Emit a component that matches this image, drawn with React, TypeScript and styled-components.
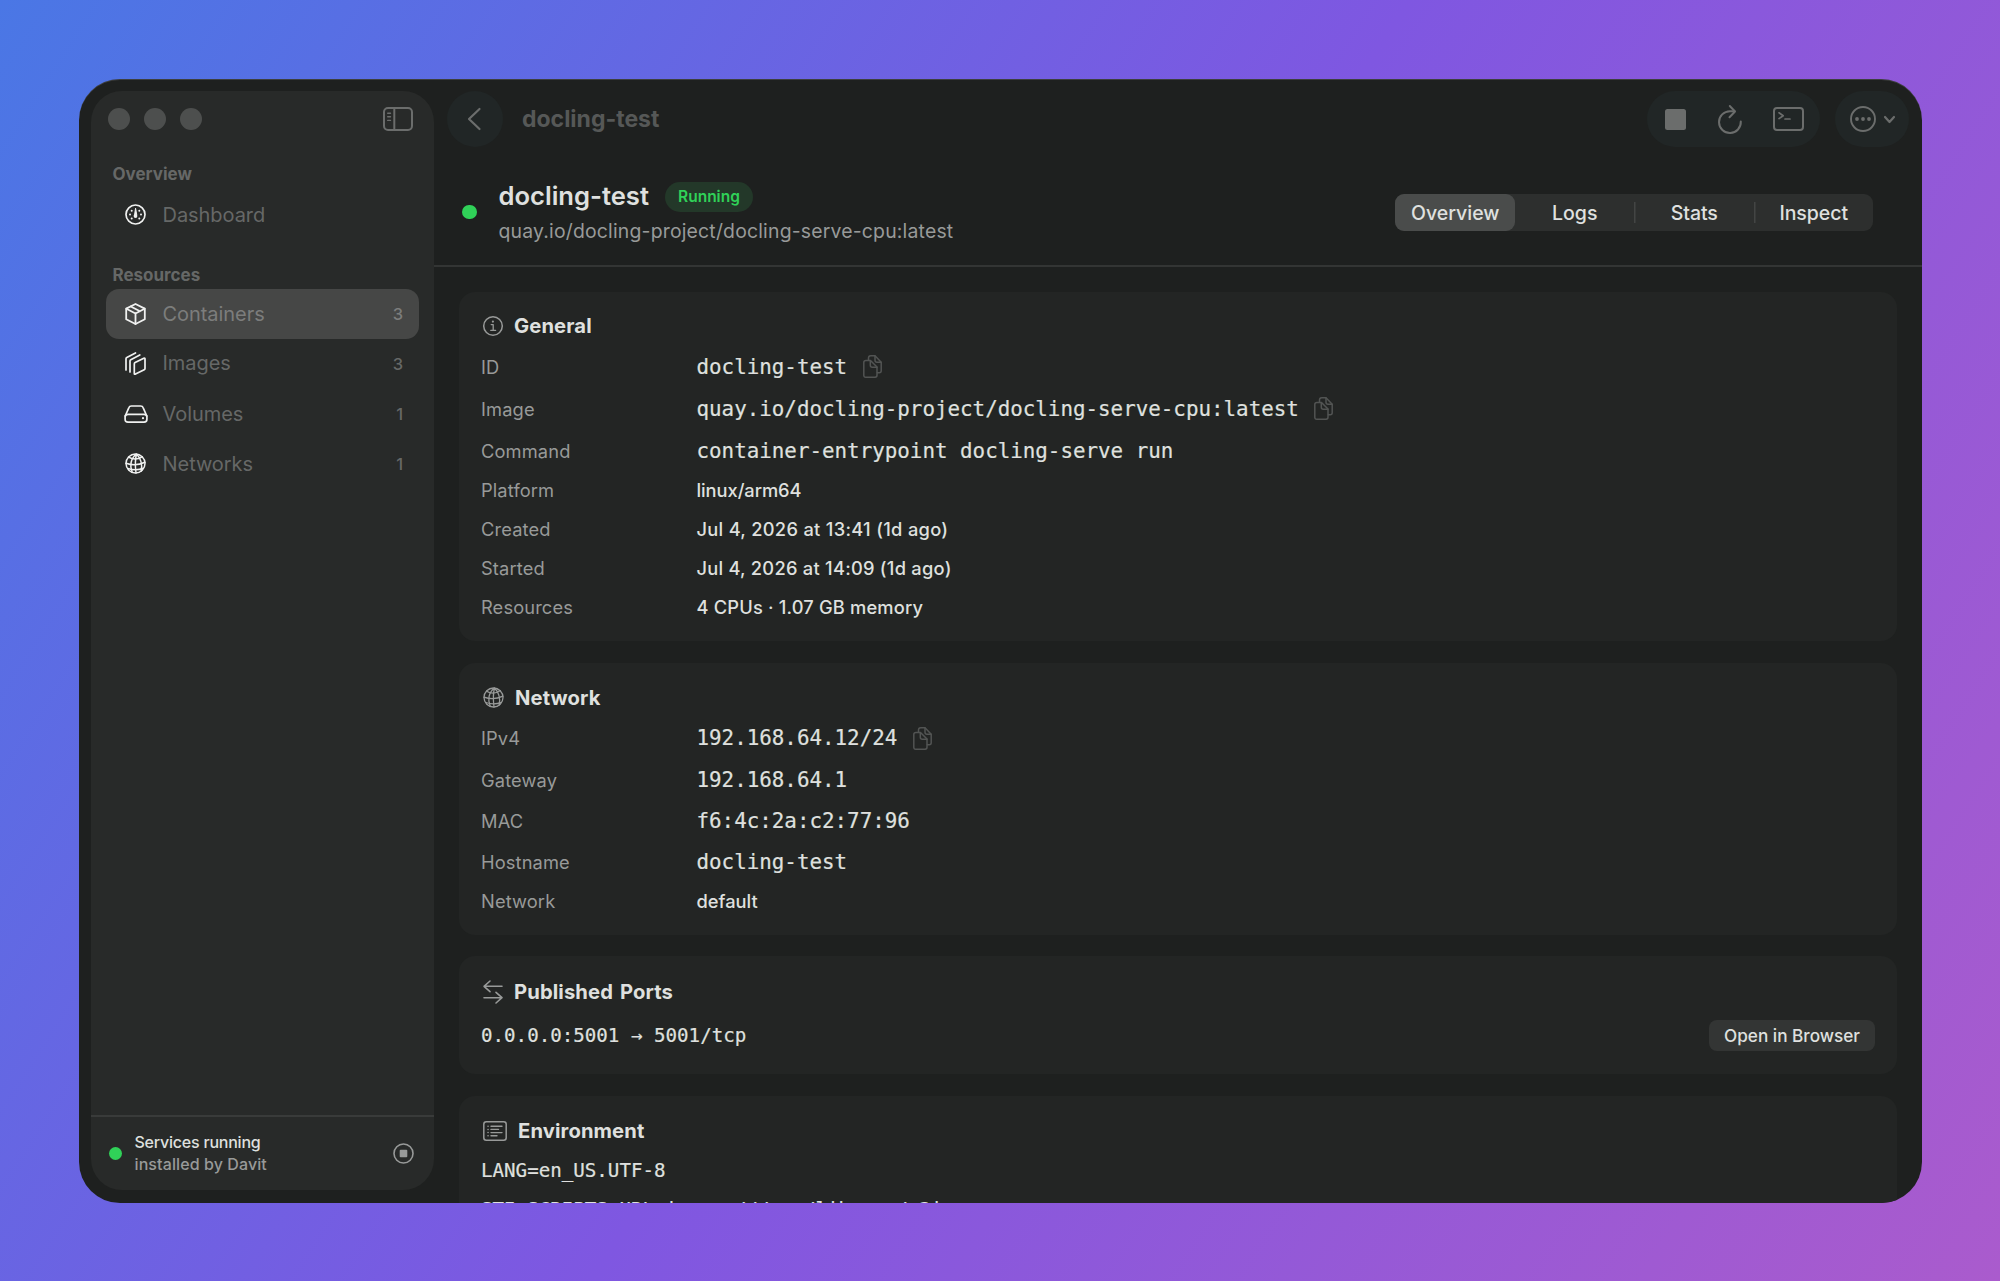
import React from "react";
import styled, { createGlobalStyle } from "styled-components";

const sans = `Inter, "Liberation Sans", sans-serif`;
const mono = `"DejaVu Sans Mono", "Liberation Mono", monospace`;

const c = {
  window: "#1e201f",
  sidebar: "#282a29",
  card: "#232524",
  glass: "#212626",
  line: "#333534",
  text: "#dfe0df",
  muted: "#989a99",
  dim: "#666867",
  glyph: "#6b6d6c",
  green: "#30d158",
};

const Global = createGlobalStyle`
  *, *::before, *::after { box-sizing: border-box; }
  body { margin: 0; }
`;

const Desktop = styled.div`
  width: 2000px;
  height: 1281px;
  padding: 78.5px;
  background: linear-gradient(122.6deg, #4a77e5 0%, #7f57e1 50%, #aa5bcd 100%);
  font-family: ${sans};
  color: ${c.text};
  overflow: hidden;
`;

const Window = styled.div`
  display: flex;
  height: 1124px;
  border-radius: 41px;
  overflow: hidden;
  background: ${c.window};
  box-shadow: inset 0 1px 0 rgba(255, 255, 255, 0.14);
`;

const Sidebar = styled.aside`
  display: flex;
  flex-direction: column;
  flex: none;
  width: 343.5px;
  margin: 12.5px 0 12.5px 12px;
  border-radius: 31px;
  background: ${c.sidebar};
`;

const TitleRow = styled.div`
  display: flex;
  align-items: center;
  gap: 14px;
  height: 56px;
  padding: 0 21.5px 0 17px;
`;

const Light = styled.span`
  width: 22px;
  height: 22px;
  border-radius: 50%;
  background: #4d4f4e;
`;

const Spacer = styled.span`
  flex: 1;
`;

const ToggleButton = styled.span`
  display: flex;
  color: ${c.glyph};
`;

const SectionTitle = styled.div<{ $top: number }>`
  height: 22px;
  margin-top: ${(p) => p.$top}px;
  padding-left: 22px;
  font-size: 17px;
  line-height: 22px;
  font-weight: 650;
  color: ${c.dim};
`;

const Nav = styled.nav<{ $top: number }>`
  display: flex;
  flex-direction: column;
  margin-top: ${(p) => p.$top}px;
  padding: 0 15.5px;
`;

const NavItem = styled.a<{ $active?: boolean }>`
  display: flex;
  align-items: center;
  height: 50px;
  padding: 0 16.5px;
  border-radius: 13px;
  color: ${(p) => (p.$active ? "#7c7d7c" : c.dim)};
  background: ${(p) => (p.$active ? "#464746" : "transparent")};
  font-size: 20px;
  letter-spacing: -0.05px;
`;

const NavIcon = styled.span`
  display: flex;
  justify-content: center;
  width: 26px;
  margin-right: 14px;
  color: #f0f1f0;
`;

const NavLabel = styled.span<{ $lift?: boolean }>`
  flex: 1;
  padding-bottom: ${(p) => (p.$lift ? 2 : 0)}px;
`;

const Count = styled.span`
  margin-right: -1px;
  font-size: 16.5px;
  font-weight: 500;
`;

const Footer = styled.footer`
  display: flex;
  align-items: center;
  height: 75.5px;
  margin-top: auto;
  padding: 2px 20px 2px 18.5px;
  border-top: 2px solid #393b3a;
`;

const Dot = styled.span<{ $size: number }>`
  flex: none;
  width: ${(p) => p.$size}px;
  height: ${(p) => p.$size}px;
  border-radius: 50%;
  background: ${c.green};
`;

const FooterText = styled.div`
  flex: 1;
  margin-left: 12.5px;
  font-size: 16px;
  line-height: 22px;
  font-weight: 500;
  letter-spacing: -0.22px;
`;

const FooterSub = styled.div`
  letter-spacing: 0.1px;
  color: ${c.muted};
`;

const Main = styled.main`
  display: flex;
  flex-direction: column;
  flex: 1;
  min-width: 0;
`;

const Toolbar = styled.div`
  display: flex;
  align-items: center;
  height: 56px;
  margin-top: 12.5px;
  padding: 0 12.5px;
`;

const Glass = styled.div<{ $width: number; $left?: number }>`
  display: flex;
  align-items: center;
  justify-content: center;
  gap: 8px;
  width: ${(p) => p.$width}px;
  height: 56px;
  margin-left: ${(p) => p.$left ?? 0}px;
  border-radius: 28px;
  background: ${c.glass};
  color: ${c.glyph};
`;

const BackButton = styled(Glass)`
  padding-right: 2px;
`;

const Actions = styled(Glass)`
  justify-content: space-between;
  padding: 0 15.5px 0 18px;
`;

const ToolbarTitle = styled.div`
  margin-left: 19.5px;
  font-size: 23px;
  font-weight: 650;
  color: #565857;
`;

const Header = styled.header`
  display: flex;
  align-items: center;
  height: 120px;
  padding: 12px 48.5px 0 28px;
  border-bottom: 2px solid ${c.line};
`;

const Identity = styled.div`
  flex: 1;
  margin-left: 22px;
`;

const NameRow = styled.div`
  display: flex;
  align-items: center;
  gap: 16px;
  height: 32px;
  margin-top: 1px;
`;

const Name = styled.h1`
  margin: 0;
  font-size: 25.6px;
  line-height: 32px;
  font-weight: 620;
`;

const Badge = styled.span`
  width: 88px;
  height: 30px;
  margin-top: 3px;
  border-radius: 15px;
  background: #233829;
  color: ${c.green};
  font-size: 15.5px;
  line-height: 30px;
  font-weight: 600;
  text-align: center;
`;

const ImageRef = styled.div`
  margin-top: 4px;
  font-size: 19.4px;
  line-height: 30px;
  font-weight: 430;
  letter-spacing: 0.19px;
  color: ${c.muted};
`;

const Tabs = styled.div`
  display: grid;
  grid-template-columns: repeat(4, 1fr);
  width: 478px;
  height: 37px;
  border-radius: 9px;
  background: #2d2f2e;
`;

const Tab = styled.button<{ $selected?: boolean; $divided?: boolean }>`
  display: flex;
  align-items: center;
  justify-content: center;
  padding: 1px 0 0 1px;
  border: 0;
  border-radius: ${(p) => (p.$selected ? 9 : 0)}px;
  background: ${(p) =>
    p.$selected
      ? "#4a4c4b"
      : p.$divided
        ? "linear-gradient(#434544, #434544) left center / 1.5px 21px no-repeat"
        : "transparent"};
  color: ${c.text};
  font-family: ${sans};
  font-size: 19.5px;
  font-weight: 500;
  letter-spacing: -0.03px;
`;

const Content = styled.div`
  display: flex;
  flex-direction: column;
  flex: 1;
  gap: 21.7px;
  min-height: 0;
  padding: 24.7px 24.5px 0 24.5px;
  overflow: hidden;
`;

const Card = styled.section<{ $height: number; $top?: number }>`
  flex: none;
  height: ${(p) => p.$height}px;
  padding: ${(p) => p.$top ?? 21}px 22px 0 22.5px;
  border-radius: 16px;
  background: ${c.card};
`;

const CardTitle = styled.h2<{ $bottom: number }>`
  display: flex;
  align-items: center;
  gap: 11.5px;
  height: 28px;
  margin: 0 0 ${(p) => p.$bottom}px;
  padding-left: 1.5px;
  font-size: 20.2px;
  line-height: 28px;
  font-weight: 700;
  letter-spacing: 0.12px;
  word-spacing: 2px;
`;

const TitleIcon = styled.span`
  display: flex;
  color: ${c.muted};
`;

const Row = styled.div<{ $height: number }>`
  display: flex;
  align-items: baseline;
  height: ${(p) => p.$height}px;
  line-height: 26px;
`;

const Key = styled.div`
  width: 215.5px;
  font-size: 18.3px;
  font-weight: 430;
  letter-spacing: 0.12px;
  color: ${c.muted};
`;

const Value = styled.div<{ $mono?: boolean; $track?: number }>`
  display: flex;
  align-items: center;
  height: 26px;
  font-family: ${(p) => (p.$mono ? mono : sans)};
  font-size: ${(p) => (p.$mono ? 20.85 : 18.3)}px;
  font-weight: ${(p) => (p.$mono ? 400 : 500)};
  letter-spacing: ${(p) => p.$track ?? 0}px;
  -webkit-text-stroke: ${(p) => (p.$mono ? 0.2 : 0)}px currentColor;
  white-space: pre;
`;

const CopyButton = styled.span`
  display: flex;
  margin-left: 15.5px;
  color: #525453;
`;

const PortRow = styled.div`
  display: flex;
  align-items: center;
  justify-content: space-between;
  height: 31px;
`;

const Code = styled.div`
  height: 39px;
  font-family: ${mono};
  font-size: 19.17px;
  line-height: 31px;
  -webkit-text-stroke: 0.2px currentColor;
  white-space: pre;
`;

const PortText = styled(Code)`
  height: 31px;
`;

const BrowserButton = styled.button`
  width: 166px;
  height: 31px;
  padding: 0;
  border: 0;
  border-radius: 8px;
  background: #333534;
  color: ${c.text};
  font-family: ${sans};
  font-size: 17.2px;
  font-weight: 500;
`;

const Drawing = styled.svg`
  display: block;
  overflow: visible;
  fill: none;
  stroke: currentColor;
  stroke-linecap: round;
  stroke-linejoin: round;
`;

const Svg = ({
  w,
  h,
  sw = 2,
  children,
}: {
  w: number;
  h: number;
  sw?: number;
  children: React.ReactNode;
}) => (
  <Drawing width={w} height={h} viewBox={`0 0 ${w} ${h}`} strokeWidth={sw}>
    {children}
  </Drawing>
);

const SidebarToggleIcon = () => (
  <Svg w={30} h={24}>
    <rect x="1" y="1" width="28" height="22" rx="4" />
    <path d="M11.3 1v22" />
    <path d="M4.7 6.2h2.8M4.7 9.8h2.8M4.7 13.4h2.8" strokeWidth="1.4" />
  </Svg>
);

const GaugeIcon = () => (
  <Svg w={21} h={21} sw={1.7}>
    <circle cx="10.5" cy="10.5" r="9.5" />
    <path d="M10.5 4.6 9.6 10.8h1.8z" fill="currentColor" strokeWidth="1" />
    <circle cx="10.5" cy="12" r="1.9" fill="currentColor" stroke="none" />
    <g fill="currentColor" stroke="none">
      <circle cx="6.7" cy="6.7" r="1" />
      <circle cx="14.3" cy="6.7" r="1" />
      <circle cx="5" cy="10.5" r="1" />
      <circle cx="16" cy="10.5" r="1" />
      <circle cx="6.7" cy="14.4" r="1" />
      <circle cx="14.3" cy="14.4" r="1" />
    </g>
  </Svg>
);

const BoxIcon = () => (
  <Svg w={21} h={22} sw={1.8}>
    <path d="M10.5 1 19.8 5.6v10.6L10.5 21 1.2 16.2V5.6Z" />
    <path d="M1.4 5.8 10.5 10.5l9.1-4.7M10.5 10.5V21M5.8 3.5l9.2 4.7" />
  </Svg>
);

const StackIcon = () => (
  <Svg w={21} h={23} sw={1.7}>
    <path d="M1 18V6.8q0-.9.8-1.3L10.5 1" />
    <path d="M5 20V9q0-.9.8-1.3L14.8 3" />
    <path d="M9.3 11.9q0-.9.8-1.3l8.7-4.4q1.2-.5 1.2.7v9.5q0 .9-.8 1.3l-8.7 4.4q-1.2.5-1.2-.7Z" />
  </Svg>
);

const DriveIcon = () => (
  <Svg w={24} h={18} sw={1.7}>
    <path d="M1.2 11 4.8 2.8Q5.5 1 7.4 1h9.2q1.9 0 2.6 1.8L22.8 11" />
    <path d="M4 9.3h16q2.9 0 2.9 2.7v2.2q0 2.9-2.9 2.9H4q-2.9 0-2.9-2.9V12q0-2.7 2.9-2.7Z" />
    <circle cx="19" cy="13.2" r="1.1" fill="currentColor" stroke="none" />
  </Svg>
);

const GlobeIcon = ({ sw = 1.5 }: { sw?: number }) => (
  <Svg w={21} h={21} sw={sw}>
    <circle cx="10.5" cy="10.5" r="9.5" />
    <path d="M11.5 1C5.5 5.5 4.5 13 7.2 19.3M11.5 1c-1.3 5-1.4 12-.5 19M11.5 1c4 4 6 10 4.800 17" />
    <path d="M3.5 4.2c4 2.3 9.5 2.3 13.700-.4M1 10.200c6 2.200 13 1.800 19-1M2.800 15.500c5 1.600 11 1.600 15.600-.2" />
  </Svg>
);

const StopCircleIcon = () => (
  <Svg w={21} h={21} sw={1.6}>
    <circle cx="10.5" cy="10.5" r="9.5" />
    <rect x="6.7" y="6.7" width="7.6" height="7.6" rx="1" fill="currentColor" stroke="none" />
  </Svg>
);

const BackIcon = () => (
  <Svg w={14} h={24} sw={2.2}>
    <path d="M12.5 2 2 12l10.5 10" />
  </Svg>
);

const StopIcon = () => (
  <Svg w={21} h={21}>
    <rect width="21" height="21" rx="2.5" fill="currentColor" stroke="none" />
  </Svg>
);

const ReloadIcon = () => (
  <Svg w={24} h={28}>
    <path d="M22.8 16.5A10.9 10.9 0 1 1 12 6.2h4.5" />
    <path d="m11.8 1 5.2 5.5-5.5 5.8" />
  </Svg>
);

const TerminalIcon = () => (
  <Svg w={31} h={24}>
    <rect x="1" y="1" width="29" height="22" rx="3" />
    <path d="m6 5.8 4.2 2.9L6 11.6M12 12h5" strokeWidth="1.7" />
  </Svg>
);

const MoreIcon = () => (
  <Svg w={26} h={26} sw={1.9}>
    <circle cx="13" cy="13" r="12" />
    <g fill="currentColor" stroke="none">
      <circle cx="7" cy="13" r="1.9" />
      <circle cx="13" cy="13" r="1.9" />
      <circle cx="19" cy="13" r="1.9" />
    </g>
  </Svg>
);

const ChevronIcon = () => (
  <Svg w={11} h={7} sw={2.2}>
    <path d="M1 1l4.5 5L10 1" />
  </Svg>
);

const InfoIcon = () => (
  <Svg w={20} h={20} sw={1.5}>
    <circle cx="10" cy="10" r="9.3" />
    <path d="M8.2 8.6h2v5.6M7.8 14.4h4.8" strokeWidth="1.3" />
    <circle cx="9.9" cy="5.6" r="1.1" fill="currentColor" stroke="none" />
  </Svg>
);

const SwapIcon = () => (
  <Svg w={20} h={24} sw={1.6}>
    <path d="M19 6.3H1M7 1 1 6.3l6 5.4M1 17.7h18M13 12.3l6 5.4L13 23" />
  </Svg>
);

const ListIcon = () => (
  <Svg w={24} h={20} sw={1.5}>
    <rect x=".8" y=".8" width="22.4" height="18.4" rx="2.5" />
    <path d="M8 5.2h11M8 8.4h7.5M8 11.6h11M8 14.8h6" strokeWidth="1.4" />
    <path d="M5 5.2h.1M5 8.4h.1M5 11.6h.1M5 14.8h.1" strokeWidth="1.5" />
  </Svg>
);

const CopyIcon = () => (
  <Svg w={19} h={23} sw={1.5}>
    <path d="M3 5.5h4.5L14 12v8.3q0 1.9-1.9 1.9H2.7Q.8 22.2.8 20.3V7.4Q.8 5.5 3 5.5Z" />
    <path d="M7.3 5.7v4.6q0 2 2 2H14" />
    <path d="M5.5 5.3V3q0-2.2 2.2-2.2H12l6.2 6.4v8.6q0 2-2 2H14.3" />
    <path d="M12 1v4.3q0 2 2 2h4" />
  </Svg>
);

const resources = [
  { label: "Containers", count: 3, icon: <BoxIcon />, active: true },
  { label: "Images", count: 3, icon: <StackIcon />, lift: true },
  { label: "Volumes", count: 1, icon: <DriveIcon /> },
  { label: "Networks", count: 1, icon: <GlobeIcon /> },
];

type Entry = {
  k: string;
  v: string;
  h: number;
  mono?: boolean;
  copy?: boolean;
  track?: number;
};

const general: Entry[] = [
  { k: "ID", v: "docling-test", h: 42.3, mono: true, copy: true },
  { k: "Image", v: "quay.io/docling-project/docling-serve-cpu:latest", h: 42.3, mono: true, copy: true },
  { k: "Command", v: "container-entrypoint docling-serve run", h: 39, mono: true },
  { k: "Platform", v: "linux/arm64", h: 39, track: -0.05 },
  { k: "Created", v: "Jul 4, 2026 at 13:41 (1d ago)", h: 39, track: 0.3 },
  { k: "Started", v: "Jul 4, 2026 at 14:09 (1d ago)", h: 39, track: 0.25 },
  { k: "Resources", v: "4 CPUs · 1.07 GB memory", h: 39, track: 0.17 },
];

const network: Entry[] = [
  { k: "IPv4", v: "192.168.64.12/24", h: 42, mono: true, copy: true },
  { k: "Gateway", v: "192.168.64.1", h: 40.8, mono: true },
  { k: "MAC", v: "f6:4c:2a:c2:77:96", h: 40.8, mono: true },
  { k: "Hostname", v: "docling-test", h: 39, mono: true },
  { k: "Network", v: "default", h: 39 },
];

const Rows = ({ items }: { items: Entry[] }) => (
  <>
    {items.map((e) => (
      <Row key={e.k} $height={e.h}>
        <Key>{e.k}</Key>
        <Value $mono={e.mono} $track={e.track}>
          {e.v}
          {e.copy && (
            <CopyButton>
              <CopyIcon />
            </CopyButton>
          )}
        </Value>
      </Row>
    ))}
  </>
);

export default function App() {
  return (
    <Desktop>
      <Global />
      <Window>
        <Sidebar>
          <TitleRow>
            <Light />
            <Light />
            <Light />
            <Spacer />
            <ToggleButton>
              <SidebarToggleIcon />
            </ToggleButton>
          </TitleRow>
          <SectionTitle $top={16}>Overview</SectionTitle>
          <Nav $top={4.5}>
            <NavItem>
              <NavIcon>
                <GaugeIcon />
              </NavIcon>
              <NavLabel>Dashboard</NavLabel>
            </NavItem>
          </Nav>
          <SectionTitle $top={24}>Resources</SectionTitle>
          <Nav $top={3}>
            {resources.map((r) => (
              <NavItem key={r.label} $active={r.active}>
                <NavIcon>{r.icon}</NavIcon>
                <NavLabel $lift={r.lift}>{r.label}</NavLabel>
                <Count>{r.count}</Count>
              </NavItem>
            ))}
          </Nav>
          <Footer>
            <Dot $size={13} />
            <FooterText>
              Services running
              <FooterSub>installed by Davit</FooterSub>
            </FooterText>
            <TitleIcon>
              <StopCircleIcon />
            </TitleIcon>
          </Footer>
        </Sidebar>
        <Main>
          <Toolbar>
            <BackButton $width={56}>
              <BackIcon />
            </BackButton>
            <ToolbarTitle>docling-test</ToolbarTitle>
            <Spacer />
            <Actions $width={172.5}>
              <StopIcon />
              <ReloadIcon />
              <TerminalIcon />
            </Actions>
            <Glass $width={74} $left={15.5}>
              <MoreIcon />
              <ChevronIcon />
            </Glass>
          </Toolbar>
          <Header>
            <Dot $size={14.5} />
            <Identity>
              <NameRow>
                <Name>docling-test</Name>
                <Badge>Running</Badge>
              </NameRow>
              <ImageRef>quay.io/docling-project/docling-serve-cpu:latest</ImageRef>
            </Identity>
            <Tabs>
              <Tab $selected>Overview</Tab>
              <Tab>Logs</Tab>
              <Tab $divided>Stats</Tab>
              <Tab $divided>Inspect</Tab>
            </Tabs>
          </Header>
          <Content>
            <Card $height={349.3} $top={20}>
              <CardTitle $bottom={14}>
                <TitleIcon>
                  <InfoIcon />
                </TitleIcon>
                General
              </CardTitle>
              <Rows items={general} />
            </Card>
            <Card $height={272}>
              <CardTitle $bottom={13.6}>
                <TitleIcon>
                  <GlobeIcon sw={1.3} />
                </TitleIcon>
                Network
              </CardTitle>
              <Rows items={network} />
            </Card>
            <Card $height={117.6} $top={21.5}>
              <CardTitle $bottom={14.5}>
                <TitleIcon>
                  <SwapIcon />
                </TitleIcon>
                Published Ports
              </CardTitle>
              <PortRow>
                <PortText>0.0.0.0:5001 → 5001/tcp</PortText>
                <BrowserButton>Open in Browser</BrowserButton>
              </PortRow>
            </Card>
            <Card $height={200}>
              <CardTitle $bottom={10}>
                <TitleIcon>
                  <ListIcon />
                </TitleIcon>
                Environment
              </CardTitle>
              <Code>LANG=en_US.UTF-8</Code>
              <Code>STI_SCRIPTS_URL=image:///usr/libexec/s2i</Code>
            </Card>
          </Content>
        </Main>
      </Window>
    </Desktop>
  );
}
